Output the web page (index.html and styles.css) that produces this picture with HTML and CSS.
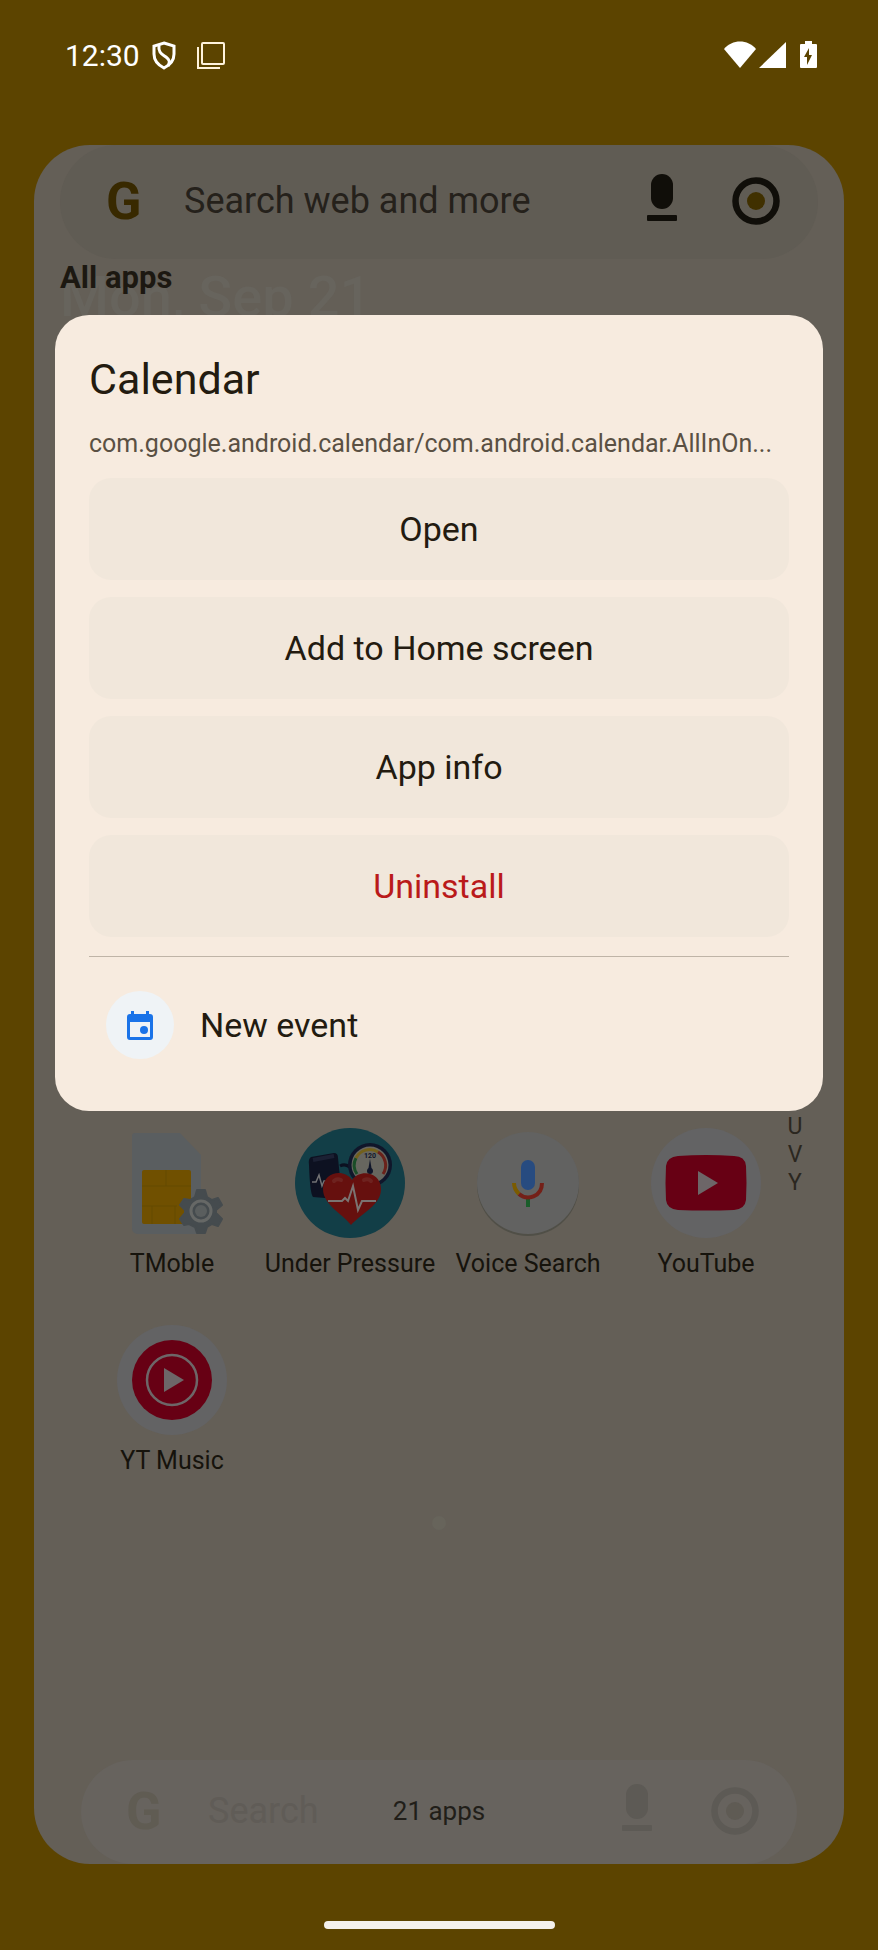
FILE: index.html
```html
<!DOCTYPE html>
<html lang="en">
<head>
    <meta charset="UTF-8">
    <meta name="viewport" content="width=device-width, initial-scale=1.0">
    <title>All apps</title>
    <link rel="stylesheet" href="styles.css">
</head>
<body>
    <header class="status-bar">
        <span class="clock">12:30</span>
        <svg class="shield" width="26" height="30" viewBox="0 0 26 30" fill="none" stroke="#fff" stroke-width="3">
            <path d="M13 2 L23 5 V13 C23 20 19 24 13 27 C7 24 3 20 3 13 V5 Z"/>
            <path d="M8 4 C7 12 11 13 15 16 C19 19 19 21 17 25" />
        </svg>
        <svg class="windows" width="28" height="28" viewBox="0 0 28 28" fill="none" stroke="#fff3dc" stroke-width="2">
            <rect x="5" y="1" width="22" height="21" rx="1"/>
            <path d="M1 5 V26 H23"/>
        </svg>
        <div class="status-right">
            <svg width="32" height="28" viewBox="0 0 32 28" fill="#fff"><path d="M0 8 C8 -2 24 -2 32 8 L16 27 Z"/></svg>
            <svg class="signal" width="27" height="28" viewBox="0 0 27 28" fill="#fff"><path d="M27 1 V27 H0 Z"/></svg>
            <svg width="18" height="28" viewBox="0 0 18 28">
                <path fill="#fff" d="M5 0 H12 V3 H16 Q17 3 17 4 V26 Q17 27 16 27 H1 Q0 27 0 26 V4 Q0 3 1 3 H5 Z"/>
                <path fill="#5c4400" d="M9 7 L4 16 H7 V24 L12 14 H9 Z"/>
            </svg>
        </div>
    </header>

    <main class="drawer">
        <div class="wallpaper-date">Mon, Sep 21</div>

        <form class="search">
            <span class="logo">G</span>
            <input class="search-input" type="text" placeholder="Search web and more" aria-label="Search web and more">
            <button class="icon-button" type="button" aria-label="Voice search">
                <svg class="mic" width="30" height="48" viewBox="0 0 30 48" fill="#100e09"><rect x="4" y="0" width="22" height="35" rx="11"/><rect x="0" y="41" width="30" height="6" rx="1"/></svg>
            </button>
            <button class="icon-button" type="button" aria-label="Lens">
                <svg width="48" height="48" viewBox="0 0 48 48"><circle cx="24" cy="24" r="20.5" fill="none" stroke="#100e09" stroke-width="6.5"/><circle cx="24" cy="24" r="9" fill="#403000"/></svg>
            </button>
        </form>

        <h1 class="heading">All apps</h1>

        <div class="apps-area">
            <div class="apps">
                <a class="app" href="#">
                    <svg width="110" height="110" viewBox="0 0 110 110">
                        <path fill="#5a5e60" d="M18 5 H63 L84 27 V106 H22 Q15 106 15 100 V8 Q15 5 18 5 Z"/>
                        <rect x="25" y="42" width="49" height="54" rx="2" fill="#705000"/>
                        <path d="M25 58 H74 M25 78 H60 M49 42 V58 M35 78 V96 M58 78 V96" stroke="#654a00" stroke-width="1" fill="none"/>
                        <path fill="#454b4e" stroke="#454b4e" stroke-width="2" stroke-linejoin="round" d="M80 62 H88 L90 69 L95 72 L101 70 L105 77 L99 82 V85 L105 91 L101 98 L95 96 L90 99 L88 105 H80 L78 99 L72 96 L67 97 L63 91 L68 85 V82 L63 77 L67 71 L73 72 L78 69 Z"/>
                        <circle cx="84" cy="83" r="10" fill="none" stroke="#666866" stroke-width="3"/>
                        <circle cx="84" cy="83" r="6" fill="#5a5e5e"/>
                    </svg>
                    <span>TMoble</span>
                </a>
                <a class="app" href="#">
                    <svg width="110" height="110" viewBox="0 0 110 110">
                        <circle cx="55" cy="55" r="55" fill="#123e47"/>
                        <path d="M45 38 Q52 34 60 44" fill="none" stroke="#0b1020" stroke-width="3"/>
                        <path fill="#0d1121" d="M16 29 L39 25 Q43 25 43 30 L46 60 L30 70 L18 69 Q15 66 14 37 Q13 31 16 29 Z"/>
                        <path d="M18 32 L39 28" stroke="#1b2033" stroke-width="4"/>
                        <path d="M17 54 H21 L24 47 L27 58 L29 53 H33" fill="none" stroke="#727274" stroke-width="1.5"/>
                        <circle cx="75" cy="37" r="22" fill="#10162a"/>
                        <circle cx="75" cy="37" r="18.5" fill="#67665f"/>
                        <g fill="none" stroke-width="3">
                            <path d="M62 46 A15.5 15.5 0 0 1 61 30" stroke="#1b4d28"/>
                            <path d="M61 30 A15.5 15.5 0 0 1 83 24" stroke="#73601b"/>
                            <path d="M83 24 A15.5 15.5 0 0 1 88 46" stroke="#6a211a"/>
                        </g>
                        <text x="75" y="30" class="gauge-text">120</text>
                        <path d="M75 31 L77 43 H73 Z" fill="#10162a"/><circle cx="75" cy="43" r="3" fill="#10162a"/>
                        <path fill="#66100e" d="M56 97 C48 86 28 77 28 61 C28 44 49 40 57 52 C66 40 86 45 86 61 C86 77 67 85 56 97 Z"/>
                        <path d="M39 53 Q42 50 46 52 M69 52 Q73 50 76 53" fill="none" stroke="#6e221f" stroke-width="4" stroke-linecap="round"/>
                        <path d="M33 73 H47 L50 70 L53 73 L58 58 L63 82 L67 73 H81" fill="none" stroke="#7b7472" stroke-width="2"/>
                    </svg>
                    <span>Under Pressure</span>
                </a>
                <a class="app" href="#">
                    <svg width="110" height="110" viewBox="0 0 110 110">
                        <circle cx="55" cy="57" r="51" fill="#504f47"/>
                        <circle cx="55" cy="55" r="51" fill="#626261"/>
                        <rect x="48" y="32" width="14" height="30" rx="7" fill="#274b80"/>
                        <path d="M55 70 V79" stroke="#195d2a" stroke-width="4"/>
                        <g fill="none" stroke-width="4">
                            <path d="M41 55 Q41 61 46 66" stroke="#7b5b00"/>
                            <path d="M46 66 C54 73 69 69 69 55" stroke="#742018"/>
                        </g>
                    </svg>
                    <span>Voice Search</span>
                </a>
                <a class="app" href="#">
                    <svg width="110" height="110" viewBox="0 0 110 110">
                        <circle cx="55" cy="55" r="55" fill="#636364"/>
                        <path fill="#670014" d="M27 28 Q55 26 83 28 Q94 28 95 38 Q96 55 95 72 Q94 81 83 82 Q55 83 27 82 Q16 81 15 72 Q14 55 15 38 Q16 29 27 28 Z"/>
                        <path fill="#6d6668" d="M47 43 L67 55 L47 67 Z"/>
                    </svg>
                    <span>YouTube</span>
                </a>
                <a class="app" href="#">
                    <svg width="110" height="110" viewBox="0 0 110 110">
                        <circle cx="55" cy="55" r="55" fill="#636364"/>
                        <circle cx="55" cy="55" r="40" fill="#670014"/>
                        <circle cx="55" cy="55" r="25" fill="none" stroke="#6d6668" stroke-width="2.5"/>
                        <path fill="#6d6668" d="M47 43 L67 55 L47 67 Z"/>
                    </svg>
                    <span>YT Music</span>
                </a>
            </div>
            <nav class="letters">
                <a href="#">U</a>
                <a href="#">V</a>
                <a href="#">Y</a>
            </nav>
        </div>

        <div class="page-dot"></div>

        <footer class="dock">
            <span class="logo">G</span>
            <span class="dock-label">Search</span>
            <svg class="mic" width="30" height="48" viewBox="0 0 30 48" fill="#5d5a55"><rect x="4" y="0" width="22" height="35" rx="11"/><rect x="0" y="41" width="30" height="6" rx="1"/></svg>
            <svg width="48" height="48" viewBox="0 0 48 48"><circle cx="24" cy="24" r="20.5" fill="none" stroke="#5d5a55" stroke-width="6.5"/><circle cx="24" cy="24" r="9" fill="#5f5b54"/></svg>
            <span class="app-count">21 apps</span>
        </footer>
    </main>

    <div class="gesture-bar"><span class="handle"></span></div>

    <section class="sheet" role="dialog" aria-labelledby="sheet-title">
        <h2 class="sheet-title" id="sheet-title">Calendar</h2>
        <p class="component">com.google.android.calendar/com.android.calendar.AllInOn...</p>
        <div class="actions">
            <button class="action" type="button">Open</button>
            <button class="action" type="button">Add to Home screen</button>
            <button class="action" type="button">App info</button>
            <button class="action danger" type="button">Uninstall</button>
        </div>
        <hr class="divider">
        <button class="shortcut" type="button">
            <svg width="68" height="68" viewBox="0 0 68 68">
                <circle cx="34" cy="34" r="34" fill="#eff3f6"/>
                <path fill="#1a73e8" fill-rule="evenodd" d="M25 20 H28 V23 H40 V20 H43 V23 H44 Q47 23 47 26 V46 Q47 49 44 49 H24 Q21 49 21 46 V26 Q21 23 24 23 H25 Z M24 31 V46 H44 V31 Z"/>
                <circle cx="38" cy="39" r="4" fill="#1a73e8"/>
            </svg>
            New event
        </button>
    </section>
</body>
</html>
```

FILE: styles.css
```css
* {
    box-sizing: border-box;
}

body {
    font-family: Roboto, 'Liberation Sans', sans-serif;
    margin: 0;
    min-height: 100vh;
    background: #5c4400;
    color: #231b10;
    display: flex;
    flex-direction: column;
    position: relative;
}

button {
    font: inherit;
    color: inherit;
    border: none;
    background: none;
    padding: 0;
    cursor: pointer;
}

a {
    color: inherit;
    text-decoration: none;
}

svg {
    display: block;
    flex: none;
}

/* Status bar */
.status-bar {
    height: 145px;
    padding: 38px 60px 0 65px;
    display: flex;
    align-items: flex-start;
    color: #fff;
}

.clock {
    font-size: 30px;
    line-height: 36px;
}

.shield {
    margin: 3px 20px 0 11px;
}

.windows {
    margin-top: 4px;
}

.status-right {
    margin: 3px 0 0 auto;
    display: flex;
}

.signal {
    margin: 0 14px 0 3px;
}

/* App drawer */
.drawer {
    flex: 1;
    margin: 0 34px;
    border-radius: 56px;
    background: #645f57;
    overflow: hidden;
    position: relative;
    display: flex;
    flex-direction: column;
}

.wallpaper-date {
    position: absolute;
    top: 120px;
    left: 26px;
    font-size: 56px;
    font-weight: 500;
    line-height: 64px;
    color: #67645d;
}

.search {
    height: 114px;
    margin: 0 26px;
    padding: 0 38px 2px 46px;
    border-radius: 57px;
    background: #605c54;
    display: flex;
    align-items: center;
}

.logo {
    width: 78px;
    font-size: 52px;
    font-weight: bold;
    color: #382900;
}

.search-input {
    flex: 1;
    min-width: 0;
    padding: 0;
    border: none;
    outline: none;
    background: none;
    font: inherit;
    font-size: 36px;
}

.search-input::placeholder {
    color: #25211b;
    opacity: 1;
}

.icon-button + .icon-button {
    margin-left: 55px;
}

.mic {
    margin-bottom: 6px;
}

.heading {
    margin: 0 26px;
    font-size: 31px;
    line-height: 38px;
    color: #1c1811;
    position: relative;
}

.apps-area {
    padding: 814px 49px 0;
    display: flex;
    align-items: flex-start;
}

.apps {
    flex: 1;
    padding-top: 17px;
    display: grid;
    grid-template-columns: repeat(4, 1fr);
    row-gap: 45px;
}

.app {
    display: flex;
    flex-direction: column;
    align-items: center;
    gap: 10px;
    font-size: 25px;
    line-height: 32px;
    white-space: nowrap;
    color: #16130c;
}

.gauge-text {
    font-size: 7px;
    font-weight: bold;
    text-anchor: middle;
    fill: #10162a;
}

/* Letters run over the edge of the last column */
.letters {
    width: 20px;
    margin: 2px -10px 0;
    font-size: 23px;
    line-height: 28px;
    text-align: center;
    color: #2b271f;
}

.letters a {
    display: block;
}

.page-dot {
    width: 14px;
    height: 14px;
    margin: 39px auto auto;
    border-radius: 50%;
    background: #67645b;
}

.dock {
    height: 104px;
    margin: 0 47px;
    padding: 0 38px 2px 45px;
    border-radius: 52px;
    background: #67635e;
    display: flex;
    align-items: center;
    position: relative;
}

.dock .logo {
    width: 82px;
    color: #605c53;
}

.dock-label {
    flex: 1;
    font-size: 36px;
    color: #605c57;
}

.dock svg + svg {
    margin-left: 59px;
}

.app-count {
    position: absolute;
    left: 0;
    right: 0;
    text-align: center;
    font-size: 26px;
    line-height: 32px;
    color: #211e19;
}

.gesture-bar {
    height: 86px;
    padding-top: 57px;
}

.handle {
    display: block;
    width: 231px;
    height: 8px;
    margin: 0 auto;
    border-radius: 4px;
    background: #f4f1ec;
}

/* App options */
.sheet {
    position: absolute;
    top: 315px;
    left: 55px;
    right: 55px;
    padding: 34px 34px 52px;
    border-radius: 34px;
    background: #f7ebdf;
}

.sheet-title {
    margin: 0 0 18px;
    font-size: 43px;
    font-weight: normal;
    line-height: 60px;
}

.component {
    margin: 0 0 17px;
    font-size: 25px;
    line-height: 34px;
    white-space: nowrap;
    color: #5a5043;
}

.actions {
    display: flex;
    flex-direction: column;
    gap: 17px;
}

.action {
    height: 102px;
    border-radius: 22px;
    background: #f1e7db;
    font-size: 34px;
}

.danger {
    color: #ba1a1a;
}

.divider {
    height: 1px;
    margin: 19px 0 17px;
    border: none;
    background: #bfb4a7;
}

.shortcut {
    padding: 17px 17px 0;
    display: flex;
    align-items: center;
    gap: 26px;
    font-size: 34px;
}
```
